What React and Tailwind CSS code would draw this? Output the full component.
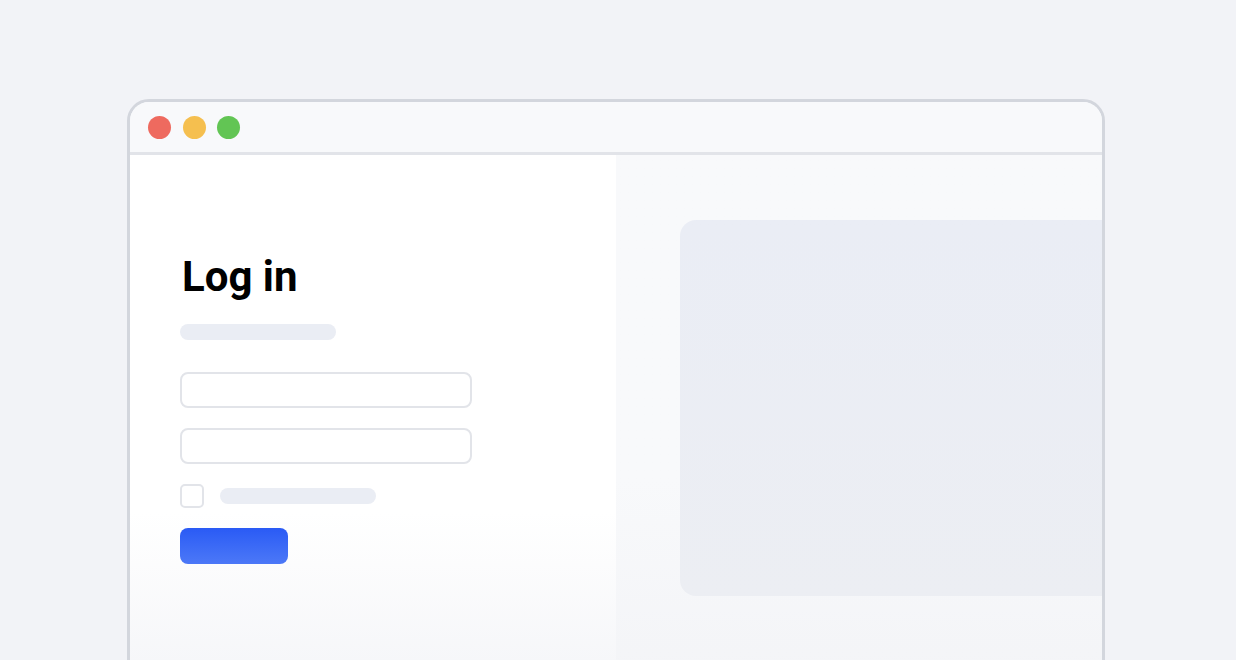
export default function App() {
  return (
    <div className="h-[660px] w-[1236px] overflow-hidden bg-[#f2f3f7] pt-[99px] pl-[127px]" style={{ fontFamily: 'Roboto, "Liberation Sans", sans-serif' }}>
      <div className="flex h-[600px] w-[978px] flex-col overflow-hidden rounded-[22px] border-[3px] border-[#d3d6dd] bg-[#f8f9fb]">
        <div className="flex h-[53px] shrink-0 items-center gap-[11.5px] border-b-[3px] border-[#e2e4e9] bg-[#f8f9fb] pl-[18px] pt-[1px]">
          <span className="h-[23px] w-[23px] rounded-full bg-[#ee6a5f]" />
          <span className="h-[23px] w-[23px] rounded-full bg-[#f5bf4f]" />
          <span className="h-[23px] w-[23px] rounded-full bg-[#62c554]" />
        </div>
        <div className="flex flex-1">
          <div className="flex w-[486px] shrink-0 flex-col bg-gradient-to-b from-white via-white via-[66%] to-[#f4f5f8] pl-[50px] pt-[101px]">
            <h1 className="ml-[2px] text-[42px] font-bold leading-none text-black">Log in</h1>
            <div className="mt-[26px] h-4 w-[156px] rounded-full bg-[#eaedf4]" />
            <div className="mt-8 h-9 w-[292px] rounded-lg border-2 border-[#e2e4e9] bg-white" />
            <div className="mt-5 h-9 w-[292px] rounded-lg border-2 border-[#e2e4e9] bg-white" />
            <div className="mt-5 flex items-center gap-4">
              <div className="h-6 w-6 rounded-[5px] border-2 border-[#e2e4e9] bg-white" />
              <div className="h-4 w-[156px] rounded-full bg-[#eaedf4]" />
            </div>
            <div className="mt-5 h-9 w-[108px] rounded-lg bg-gradient-to-b from-[#2a5af5] to-[#4c78f7]" />
          </div>
          <div className="flex-1 bg-gradient-to-b from-[#f8f9fb] via-[#f8f9fb] via-[60%] to-[#f3f4f7] pl-16 pt-[65px]">
            <div className="h-[376px] w-[460px] rounded-l-2xl bg-gradient-to-b from-[#eaedf5] to-[#eceef3]" />
          </div>
        </div>
      </div>
    </div>
  );
}
